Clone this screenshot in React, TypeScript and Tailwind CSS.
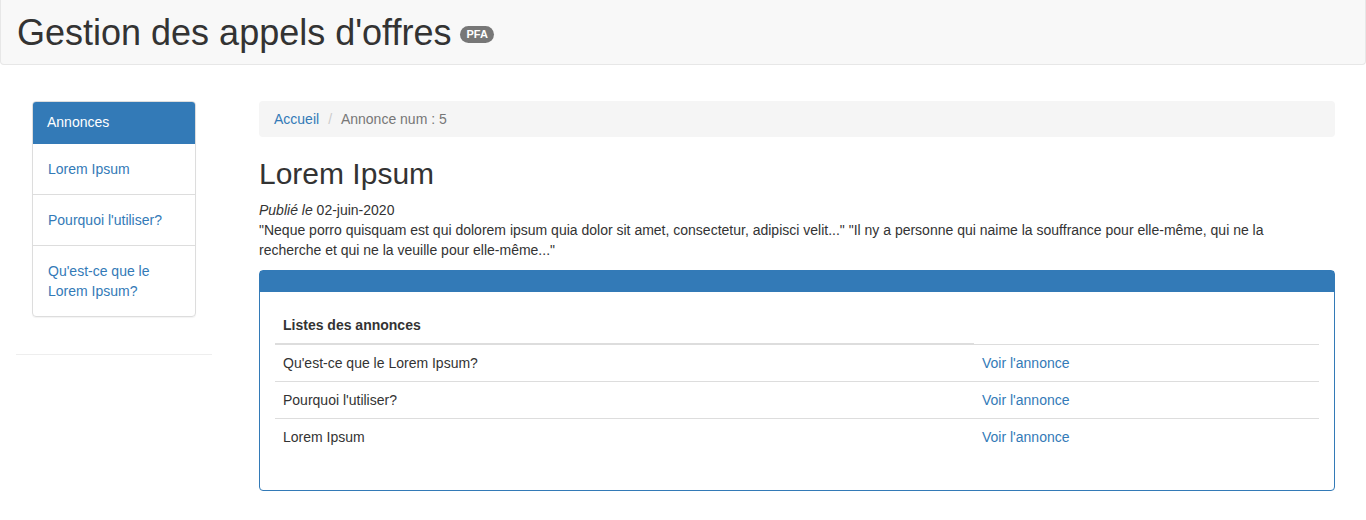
const links = ['Lorem Ipsum', "Pourquoi l'utiliser?", "Qu'est-ce que le Lorem Ipsum?"]

const annonces = ["Qu'est-ce que le Lorem Ipsum?", "Pourquoi l'utiliser?", 'Lorem Ipsum']

export default function App() {
  return (
    <div className="min-h-[520px] bg-white text-sm leading-5 text-[#333] [font-family:'Liberation_Sans',Arial,sans-serif]">
      <header className="h-[65px] rounded-b border border-t-0 border-[#e7e7e7] bg-[#f8f8f8] pl-4 pt-[13px]">
        <h1 className="flex items-center text-[36px] leading-[39.6px]">
          Gestion des appels d'offres
          <span className="relative top-[2px] ml-[9px] rounded-[10px] bg-[#777] px-[6px] py-[3px] text-[11px] leading-none font-bold text-white">
            PFA
          </span>
        </h1>
      </header>

      <div className="flex px-4 pt-9">
        <aside className="w-[196px] shrink-0">
          <div className="mx-4 overflow-hidden rounded border border-[#ddd] shadow-[0_1px_1px_rgba(0,0,0,0.05)]">
            <div className="border-b border-[#337ab7] bg-[#337ab7] pt-[10px] pb-[11px] pl-[14px] pr-[15px] text-white">
              Annonces
            </div>
            {links.map((label, i) => (
              <div key={label} className={`px-[15px] py-[15px] ${i > 0 ? 'border-t border-[#ddd]' : ''}`}>
                <a href="#" className="text-[#337ab7]">
                  {label}
                </a>
              </div>
            ))}
          </div>
          <hr className="mt-[37px] border-[#eee]" />
        </aside>

        <main className="ml-[47px] mr-[15px] flex-1">
          <ol className="mb-5 flex gap-1 rounded bg-[#f5f5f5] px-[15px] py-2">
            <li>
              <a href="#" className="text-[#337ab7]">
                Accueil
              </a>
            </li>
            <li className="text-[#777]">
              <span className="px-[5px] text-[#ccc]">/&nbsp;</span>Annonce num : 5
            </li>
          </ol>

          <h2 className="mb-[10px] text-[30px] leading-[33px]">Lorem Ipsum</h2>
          <p className="mb-[10px] pr-2">
            <em>Publié le</em> 02-juin-2020
            <br />
            "Neque porro quisquam est qui dolorem ipsum quia dolor sit amet, consectetur, adipisci velit..." "Il ny a
            personne qui naime la souffrance pour elle-même, qui ne la recherche et qui ne la veuille pour elle-même..."
          </p>

          <div className="rounded border border-[#337ab7]">
            <div className="h-[21px] bg-[#337ab7]" />
            <div className="p-[15px]">
              <table className="mb-5 w-full">
                <thead>
                  <tr>
                    <th className="w-[699px] border-b-2 border-[#ddd] p-2 text-left font-bold">Listes des annonces</th>
                    <th className="p-2" />
                  </tr>
                </thead>
                <tbody>
                  {annonces.map((title) => (
                    <tr key={title}>
                      <td className="border-t border-[#ddd] p-2">{title}</td>
                      <td className="border-t border-[#ddd] p-2">
                        <a href="#" className="text-[#337ab7]">
                          Voir l'annonce
                        </a>
                      </td>
                    </tr>
                  ))}
                </tbody>
              </table>
            </div>
          </div>
        </main>
      </div>
    </div>
  )
}
